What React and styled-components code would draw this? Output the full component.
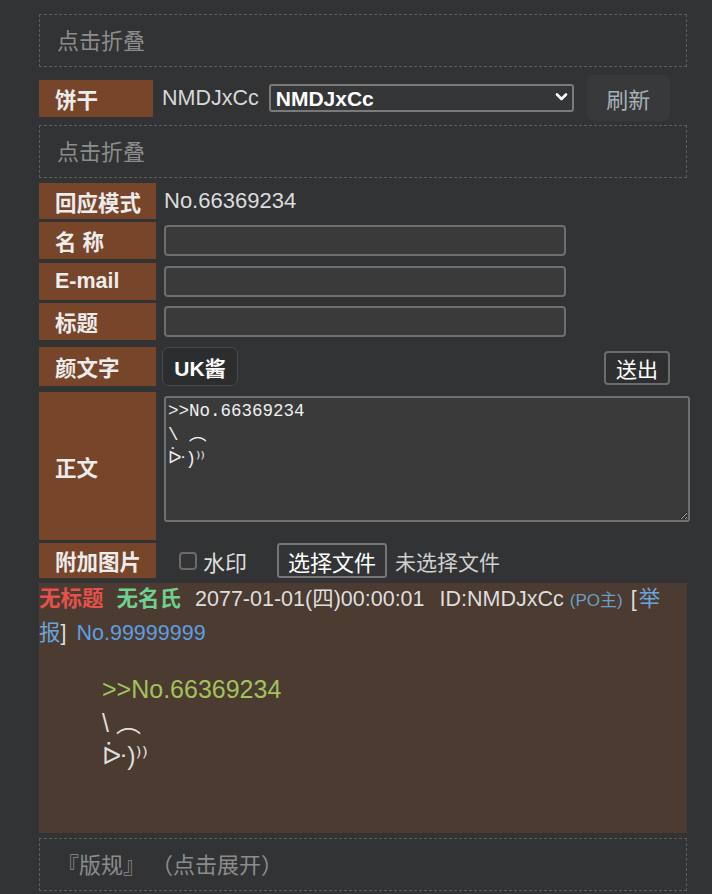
import React from 'react';
import styled, { createGlobalStyle } from 'styled-components';

const GlobalStyle = createGlobalStyle`
  body {
    margin: 0;
    background: #323334;
    font-family: "Liberation Sans", "Noto Sans CJK SC", sans-serif;
  }
`

const Page = styled.div`
  width: 648px;
  padding: 14px 0 4px 39px;
  display: flex;
  flex-direction: column;
`

const FoldBox = styled.div`
  height: 53px;
  box-sizing: border-box;
  border: 1px dashed #5c5d5e;
  padding: 0 0 3px 17px;
  display: flex;
  align-items: center;
  color: #8c8c8c;
  font-size: 22px;
  white-space: pre;
  margin-top: ${p => p.top || 0}px;
`

const Label = styled.div`
  width: ${p => p.w || 117}px;
  flex: none;
  box-sizing: border-box;
  background: #77452a;
  color: #ececec;
  font-weight: bold;
  font-size: 21.5px;
  padding-left: 16px;
  display: flex;
  align-items: center;
  height: ${p => (p.h ? p.h + 'px' : 'auto')};
`

const CookieRow = styled.div`
  display: flex;
  align-items: center;
  height: 46px;
  margin: 8px 0 4px;
`

const CookieName = styled.span`
  color: #d8d8d8;
  font-size: 21.5px;
  margin-left: 9px;
`

const SelectWrap = styled.div`
  position: relative;
  margin-left: 10px;
  width: 305px;
  height: 28px;
`

const Select = styled.select`
  appearance: none;
  width: 100%;
  height: 100%;
  box-sizing: border-box;
  border: 2px solid #7a7a7a;
  border-radius: 3px;
  background: #353637;
  color: #fff;
  font: bold 21px "Liberation Sans", sans-serif;
  padding: 0 0 0 5px;
`

const Chevron = styled.svg`
  position: absolute;
  right: 6px;
  top: 8px;
  pointer-events: none;
`

const RefreshButton = styled.button`
  margin-left: 13px;
  width: 83px;
  height: 46px;
  border: none;
  border-radius: 7px;
  background: #38393a;
  color: #a7afb6;
  font: 22px "Liberation Sans", "Noto Sans CJK SC", sans-serif;
`

const Form = styled.div`
  display: flex;
  flex-direction: column;
`

const Row = styled.div`
  display: flex;
  gap: 8px;
  margin-top: ${p => p.top || 0}px;
  height: ${p => p.h}px;
`

const Value = styled.div`
  flex: 1;
  display: flex;
  align-items: ${p => p.align || 'center'};
  justify-content: ${p => p.justify || 'flex-start'};
  color: #dcdcdc;
  font-size: 22px;
`

const TextInput = styled.input`
  width: 402px;
  height: 31px;
  box-sizing: border-box;
  border: 2px solid #6e6e6e;
  border-radius: 4px;
  background: #3a3a3a;
  color: #eee;
`

const KaoButton = styled.button`
  width: 76px;
  height: 39px;
  margin-left: -2px;
  border: 1px solid #47494b;
  border-radius: 7px;
  background: #2c2d2e;
  color: #fff;
  font: bold 21px "Liberation Sans", "Noto Sans CJK SC", sans-serif;
  padding: 0;
`

const SendButton = styled.button`
  width: 66px;
  height: 34px;
  margin: 3px 17px 0 0;
  border: 2px solid #6c6c6c;
  border-radius: 4px;
  background: #2e2f30;
  color: #fff;
  font: 21px "Liberation Sans", "Noto Sans CJK SC", sans-serif;
  padding: 0;
`

const TextArea = styled.textarea`
  width: 526px;
  height: 126px;
  flex: none;
  margin-top: 4px;
  box-sizing: border-box;
  border: 2px solid #707070;
  border-radius: 3px;
  background: #3a3a3a;
  color: #f0f0f0;
  font: 17.5px/24px "Liberation Mono", "DejaVu Sans", "Noto Sans CJK SC", monospace;
  padding: 1px 2px;
  resize: both;
`

const Check = styled.input`
  appearance: none;
  width: 18px;
  height: 18px;
  margin: 0 6px 0 15px;
  border: 2px solid #6a6a6a;
  border-radius: 4px;
  background: #333;
  box-sizing: border-box;
`

const FileButton = styled.button`
  height: 35px;
  margin-left: 30px;
  padding: 0 9px;
  border: 2px solid #767676;
  border-radius: 3px;
  background: #333435;
  color: #fff;
  font: 22px "Liberation Sans", "Noto Sans CJK SC", sans-serif;
`

const FileNote = styled.span`
  margin-left: 8px;
  color: #d0d0d0;
  font-size: 21px;
`

const Post = styled.div`
  margin-top: 5px;
  height: 250px;
  background: #4b3b30;
  color: #dedede;
  font-size: 21.5px;
  line-height: 33px;
`

const PostHead = styled.div`
  padding-right: 12px;
`

const Tag = styled.span`
  color: ${p => p.color || '#dedede'};
  font-weight: ${p => (p.bold ? 'bold' : 'normal')};
  font-size: ${p => p.size || 21.5}px;
  margin-right: ${p => (p.gap === undefined ? 13 : p.gap)}px;
`

const ReportLink = styled.span`
  color: #6aa6dc;
`

const PostBody = styled.div`
  margin-top: 23px;
  padding-left: 63px;
  font-size: 25px;
  line-height: 33.5px;
  font-family: "Liberation Sans", "DejaVu Sans", "Noto Sans CJK SC", sans-serif;
  white-space: pre;
`

const Quote = styled.div`
  color: #a2c25c;
`

export default function App() {
  return (
    <>
      <GlobalStyle />
      <Page>
        <FoldBox>点击折叠</FoldBox>

        <CookieRow>
          <Label w={114} h={37}>饼干</Label>
          <CookieName>NMDJxCc</CookieName>
          <SelectWrap>
            <Select defaultValue="NMDJxCc">
              <option>NMDJxCc</option>
            </Select>
            <Chevron width="13" height="10" viewBox="0 0 13 10">
              <path d="M2 2.5 L6.5 7 L11 2.5" fill="none" stroke="#fff" strokeWidth="2.6" strokeLinecap="round" strokeLinejoin="round" />
            </Chevron>
          </SelectWrap>
          <RefreshButton>刷新</RefreshButton>
        </CookieRow>

        <FoldBox>点击折叠</FoldBox>

        <Form>
          <Row top={5} h={36}>
            <Label>回应模式</Label>
            <Value>No.66369234</Value>
          </Row>
          <Row top={3} h={37}>
            <Label>名 称</Label>
            <Value><TextInput /></Value>
          </Row>
          <Row top={4} h={37}>
            <Label>E-mail</Label>
            <Value><TextInput /></Value>
          </Row>
          <Row top={3} h={37}>
            <Label>标题</Label>
            <Value><TextInput /></Value>
          </Row>
          <Row top={7} h={39}>
            <Label>颜文字</Label>
            <Value justify="space-between">
              <KaoButton>UK酱</KaoButton>
              <SendButton>送出</SendButton>
            </Value>
          </Row>
          <Row top={6} h={148}>
            <Label>正文</Label>
            <Value align="flex-start">
              <TextArea defaultValue={'>>No.66369234\n\\ ︵\nᐕ)⁾⁾'} />
            </Value>
          </Row>
          <Row top={3} h={35}>
            <Label>附加图片</Label>
            <Value>
              <Check type="checkbox" />
              <span>水印</span>
              <FileButton>选择文件</FileButton>
              <FileNote>未选择文件</FileNote>
            </Value>
          </Row>
        </Form>

        <Post>
          <PostHead>
            <Tag color="#e5514c" bold>无标题</Tag>
            <Tag color="#6fd08f" bold gap={14}>无名氏</Tag>
            <Tag gap={15}>2077-01-01(四)00:00:01</Tag>
            <Tag gap={6}>ID:NMDJxCc</Tag>
            <Tag color="#6b9fc6" size={17} gap={8}>(PO主)</Tag>
            <Tag gap={2}>[</Tag>
            <ReportLink>举</ReportLink><ReportLink>报</ReportLink>
            <Tag gap={10}>]</Tag>
            <Tag color="#5d9fe2" gap={0}>No.99999999</Tag>
          </PostHead>
          <PostBody>
            <Quote>{'>>No.66369234'}</Quote>
            <div>{'\\ ︵'}</div>
            <div>{'ᐕ)⁾⁾'}</div>
          </PostBody>
        </Post>

        <FoldBox top={5}>{'『版规』 （点击展开）'}</FoldBox>
      </Page>
    </>
  );
}
